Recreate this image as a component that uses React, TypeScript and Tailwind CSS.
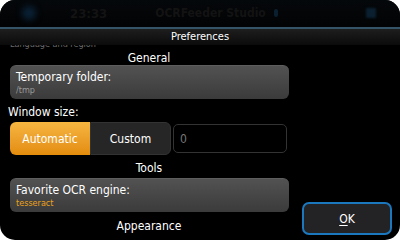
import React from "react";

const font = { fontFamily: '"DejaVu Sans Condensed", Roboto, "Liberation Sans", sans-serif' };

function SectionTitle({ label, h }: { label: string; h: string }) {
  return (
    <div className={`flex ${h} items-center justify-center text-[12px] leading-none text-white`}>{label}</div>
  );
}

function ValueBox({ label, value, accent }: { label: string; value: string; accent?: boolean }) {
  return (
    <div className="ml-[10px] flex h-[34px] w-[279px] flex-col justify-center rounded-[6px] border-t border-[#5e5e5e] bg-gradient-to-b from-[#525252] to-[#3b3b3b] px-[6px]">
      <div className="text-[12px] leading-[15px] text-white">{label}</div>
      <div className={`text-[9px] leading-[11px] ${accent ? "text-[#eaa21c]" : "text-[#9a9a9a]"}`}>{value}</div>
    </div>
  );
}

export default function App() {
  return (
    <div className="h-[240px] w-[400px] bg-white" style={font}>
      <div className="flex h-full flex-col overflow-hidden rounded-[15px] bg-black">
        {/* dimmed status bar */}
        <div className="flex h-[28px] items-center bg-gradient-to-b from-[#05080b] to-[#020304] px-[22px]">
          <div className="h-[14px] w-[14px] rounded-full bg-[#0a2236] blur-[3px]" />
          <span className="ml-[34px] text-[13px] font-bold text-[#131313]">23:33</span>
          <span className="ml-[48px] text-[12px] font-bold text-[#131313]">OCRFeeder Studio</span>
          <div className="ml-[8px] h-[8px] w-[4px] rounded-full bg-[#0a2030]" />
          <div className="ml-auto mr-[2px] h-[10px] w-[10px] bg-[#0a2030] blur-[1px]" />
        </div>
        <div className="h-[2px] bg-[#355468]" />
        {/* dialog title */}
        <div className="flex h-[17px] items-center justify-center bg-gradient-to-b from-[#1e1e1e] to-[#0b0b0b] text-[11px] leading-none text-white">
          Preferences
        </div>
        <div className="flex flex-1">
          <div className="flex w-[298px] flex-col">
            <div className="h-[6px] overflow-hidden pl-[10px]">
              <div className="-mt-[6px] text-[9px] leading-[11px] text-[#6a6a6a]">Language and region</div>
            </div>
            <SectionTitle label="General" h="h-[14px]" />
            <ValueBox label="Temporary folder:" value="/tmp" />
            <div className="flex h-[23px] items-center pl-[8px] pt-[2px] text-[12px] leading-none text-white">Window size:</div>
            <div className="ml-[10px] flex h-[33px] items-stretch">
              <button className="flex w-[80px] items-center justify-center rounded-l-[6px] bg-gradient-to-b from-[#f6b640] to-[#e38c0b] text-[12px] text-white">
                Automatic
              </button>
              <button className="flex w-[81px] items-center justify-center rounded-r-[6px] border border-[#333] bg-[#262626] text-[12px] text-white">
                Custom
              </button>
              <div className="ml-[2px] mt-[2px] flex h-[29px] w-[114px] items-center rounded-[5px] border border-[#333] bg-black px-[6px] text-[12px] text-[#777]">
                0
              </div>
            </div>
            <div className="flex h-[23px] items-end justify-center pb-[4px] text-[12px] leading-none text-white">Tools</div>
            <ValueBox label="Favorite OCR engine:" value="tesseract" accent />
            <SectionTitle label="Appearance" h="h-[28px]" />
          </div>
          <div className="flex flex-1 flex-col justify-end pb-[5px] pl-[4px] pr-[8px]">
            <button className="flex h-[33px] w-[90px] items-center justify-center rounded-[7px] border-2 border-[#1b78bf] bg-[#232325] text-[12px] text-white">
              <span className="underline underline-offset-2">O</span>K
            </button>
          </div>
        </div>
      </div>
    </div>
  );
}
